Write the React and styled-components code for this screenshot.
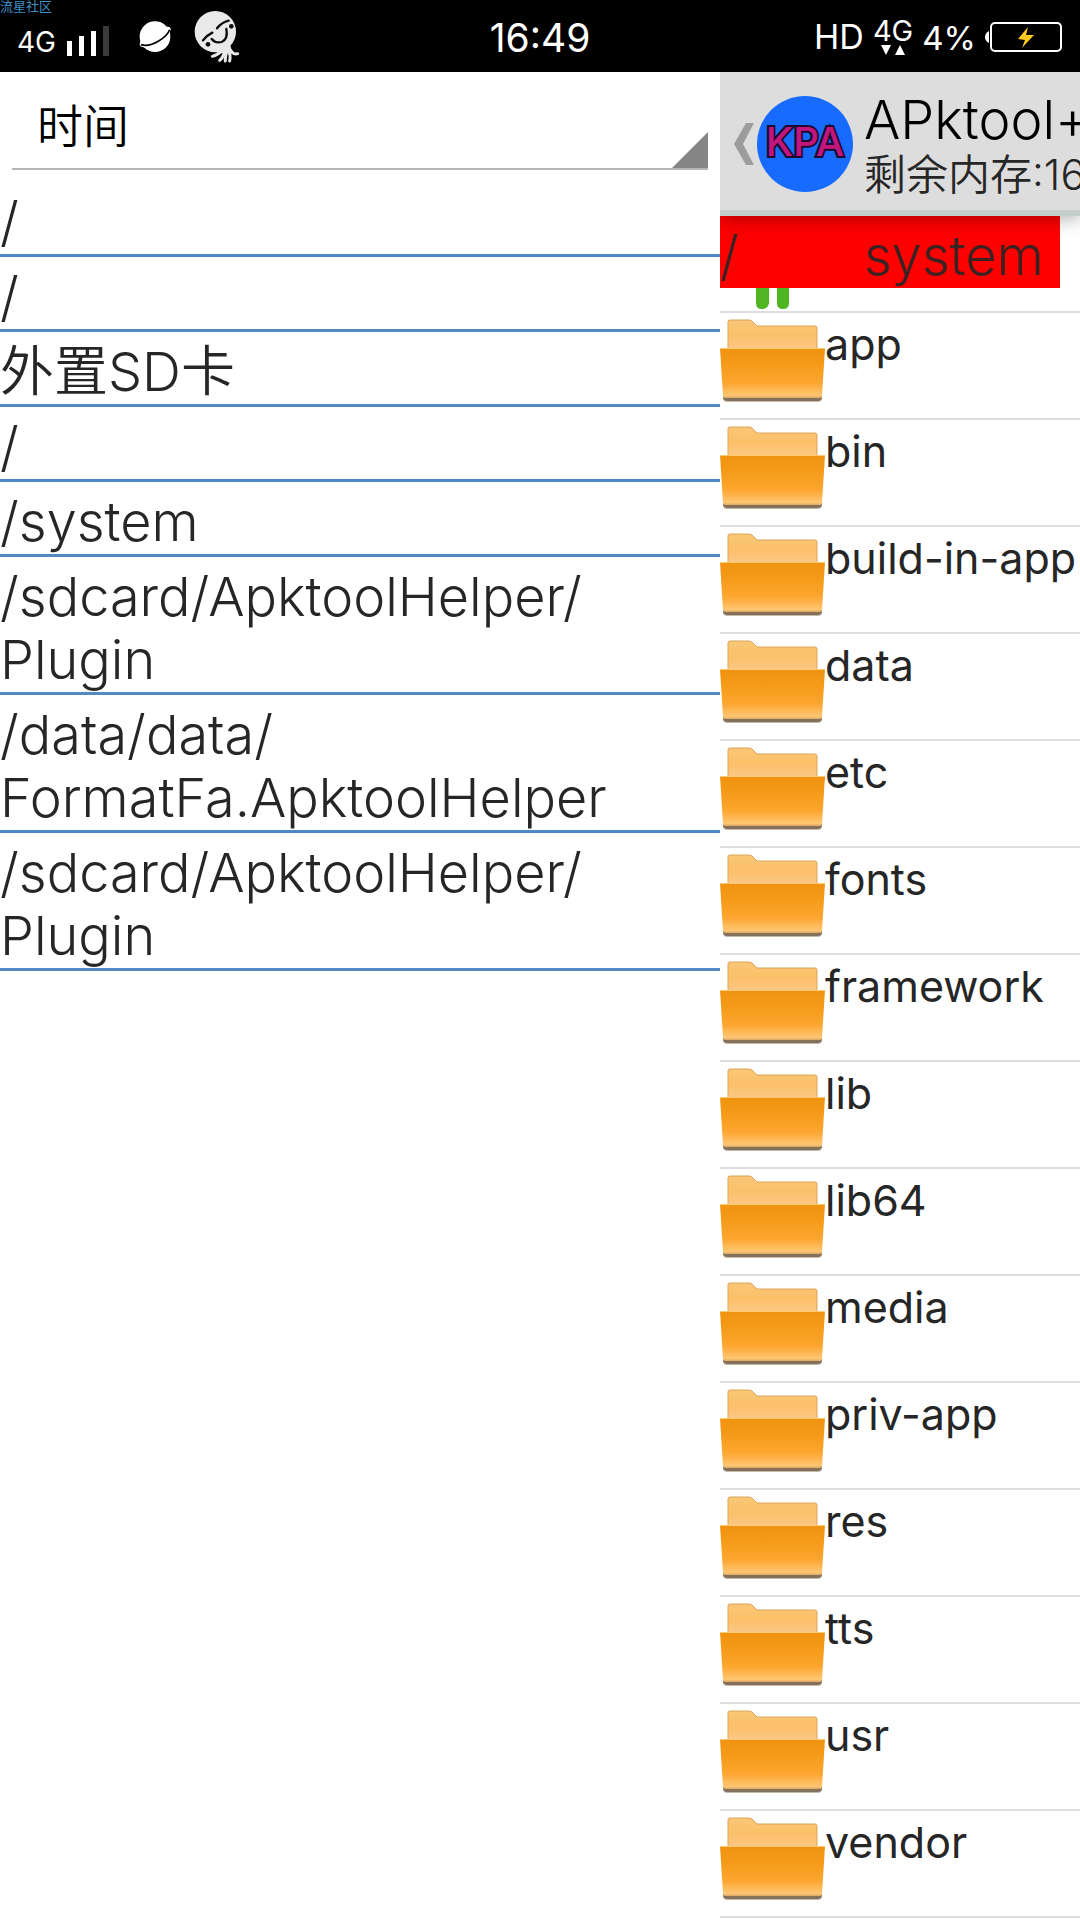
import React from 'react';
import styled, { createGlobalStyle } from 'styled-components';

const GlobalStyle = createGlobalStyle`
  * {
    box-sizing: border-box;
  }

  body {
    margin: 0;
    background: #ffffff;
    font-family: Inter, "Noto Sans CJK SC", sans-serif;
    font-weight: 350;
    color: #262626;
    overflow-x: hidden;
  }

  button, select {
    font: inherit;
    color: inherit;
    border: none;
    border-radius: 0;
    background: none;
    padding: 0;
    margin: 0;
    cursor: pointer;
  }

  ul {
    list-style: none;
    margin: 0;
    padding: 0;
  }
`;

const Screen = styled.div`
  display: flex;
  flex-direction: column;
  min-height: 100vh;
`;

/* Status bar */
const StatusBar = styled.div`
  position: relative;
  display: grid;
  grid-template-columns: 1fr auto 1fr;
  align-items: center;
  height: 72px;
  padding: 0 17px;
  background: #000000;
  color: #ffffff;
  font-weight: 400;
`;

const Watermark = styled.span`
  position: absolute;
  top: 0;
  left: 0;
  font-size: 13px;
  line-height: 13px;
  color: #3f8fc8;
`;

const StatusGroup = styled.div`
  display: flex;
  align-items: center;
  justify-content: ${({ $end }) => ($end ? 'flex-end' : 'flex-start')};
  gap: ${({ $end }) => ($end ? '9px' : '11px')};

  svg {
    flex: none;
  }
`;

const StatusText = styled.span`
  font-size: ${({ $size }) => $size}px;
  line-height: 40px;
  padding-top: ${({ $drop }) => $drop || 0}px;
`;

const SignalBars = styled.span`
  display: flex;
  padding-top: 8px;
`;

const NotificationIcons = styled.div`
  display: flex;
  align-items: center;
  gap: 19px;
  padding-left: 18px;
  padding-bottom: 2px;
`;

const DataBadge = styled.span`
  display: flex;
  flex-direction: column;
  align-items: center;
  padding-bottom: 2px;
  font-size: 29px;
  line-height: 28px;
`;

const Clock = styled.time`
  font-size: 39px;
  line-height: 72px;
  padding-top: 2px;
`;

/* Panels */
const Panels = styled.div`
  display: grid;
  grid-template-columns: 2fr minmax(0, 1fr);
  flex: 1;
`;

const Drawer = styled.aside`
  min-width: 0;
`;

const SortBox = styled.label`
  position: relative;
  display: block;
  margin: 0 12px 12px;
  border-bottom: 2px solid #b5b5b5;
`;

const SortSelect = styled.select`
  display: block;
  width: 100%;
  height: 96px;
  padding: 12px 26px 0 25px;
  appearance: none;
  outline: none;
  font-size: 46px;
  color: #000000;
`;

const Corner = styled.svg`
  position: absolute;
  right: 0;
  bottom: 0;
`;

const Bookmark = styled.button`
  display: block;
  width: 100%;
  padding: 8px 0 1px;
  border-bottom: 3px solid #5189c4;
  font-size: 54px;
  line-height: 63px;
  text-align: left;
`;

const Browser = styled.main`
  min-width: 0;
  overflow: hidden;
`;

const Header = styled.header`
  position: relative;
  z-index: 1;
  display: flex;
  align-items: center;
  height: 144px;
  padding: 6px 0 0 13px;
  background: #dddddd;
  border-bottom: 6px solid #c4cecb;
  box-shadow: 0 2px 18px rgba(0, 0, 0, 0.35);
`;

const BackButton = styled.button`
  display: flex;
  flex: none;
  width: 24px;
`;

const Logo = styled.div`
  display: flex;
  flex: none;
  align-items: center;
  justify-content: center;
  width: 96px;
  height: 96px;
  padding-bottom: 4px;
  border-radius: 50%;
  background: #176cff;
  font-size: 40px;
  font-weight: 500;
  line-height: 40px;
  color: #c4157c;
  -webkit-text-stroke: 4px #1c0a30;
  paint-order: stroke fill;
`;

const Titles = styled.div`
  flex: none;
  padding: 2px 0 0 11px;
  white-space: nowrap;
`;

const Title = styled.h1`
  margin: 0;
  font-size: 54px;
  font-weight: 350;
  line-height: 60px;
  color: #000000;
`;

const Subtitle = styled.p`
  margin: 0;
  font-size: 42px;
  line-height: 50px;
`;

const PathBar = styled.nav`
  display: flex;
  height: 72px;
  margin-right: 20px;
  background: #ff0000;
  color: #3a2222;
`;

const Segment = styled.button`
  min-width: ${({ $root }) => ($root ? '144px' : '0')};
  padding-top: 6px;
  font-size: 54px;
  line-height: 63px;
  text-align: left;
`;

const ParentRow = styled.li`
  height: 25px;
  padding-left: 34px;
  border-bottom: 2px solid #dedede;
`;

const FileRow = styled.li`
  border-bottom: 2px solid #dedede;
`;

const FileButton = styled.button`
  display: flex;
  align-items: flex-start;
  width: 100%;
  height: 105px;

  svg {
    flex: none;
  }
`;

const FileName = styled.span`
  font-size: 43px;
  font-weight: 400;
  line-height: 52px;
  padding-top: 5px;
  white-space: nowrap;
`;

const bookmarks = [
  ['/'],
  ['/'],
  ['外置SD卡'],
  ['/'],
  ['/system'],
  ['/sdcard/ApktoolHelper/', 'Plugin'],
  ['/data/data/', 'FormatFa.ApktoolHelper'],
  ['/sdcard/ApktoolHelper/', 'Plugin'],
];

const files = [
  'app',
  'bin',
  'build-in-app',
  'data',
  'etc',
  'fonts',
  'framework',
  'lib',
  'lib64',
  'media',
  'priv-app',
  'res',
  'tts',
  'usr',
  'vendor',
];

const SignalIcon = () => (
  <svg width="42" height="30" viewBox="0 0 42 30" fill="#ffffff">
    <rect x="0" y="15" width="5" height="15" />
    <rect x="12" y="10" width="5" height="20" />
    <rect x="24" y="5" width="5" height="25" />
    <rect x="36" y="0" width="6" height="30" fill="#3a3a3a" />
  </svg>
);

const PlanetIcon = () => (
  <svg width="34" height="35" viewBox="0 0 102 105">
    <circle cx="51" cy="53" r="46" fill="#ffffff" />
    <path d="M82 24 Q98 20 98 31 Q97 43 88 54Z" fill="#ffffff" />
    <path d="M8 66 Q2 77 8 82 Q14 87 28 83Z" fill="#ffffff" />
    <path d="M9 77 Q32 84 62 66 Q89 49 95 32" fill="none" stroke="#000000" strokeWidth="5" />
  </svg>
);

const SquidIcon = () => (
  <svg width="50" height="55" viewBox="0 0 150 165">
    <circle cx="73" cy="68" r="62" fill="#e9e9e9" />
    <path d="M134 72 Q128 94 118 106 Q118 120 128 128 L104 134 L76 130 Q84 126 84 118Z" fill="#e9e9e9" />
    <g fill="none" stroke="#e9e9e9" strokeWidth="9" strokeLinecap="round">
      <path d="M94 124 Q80 138 64 142" />
      <path d="M102 126 Q96 146 86 154" />
      <path d="M108 124 Q102 146 103 156" />
      <path d="M112 122 Q120 140 116 156" />
      <path d="M114 118 Q124 138 140 134" />
    </g>
    <g fill="none" stroke="#0c0c0c" strokeWidth="7" strokeLinecap="round">
      <path d="M36 94 Q46 80 64 71" />
      <path d="M78 58 Q92 40 113 35" />
      <path d="M62 90 Q74 104 92 99 Q112 90 106 60" />
    </g>
    <circle cx="51" cy="106" r="7" fill="#0c0c0c" />
    <circle cx="121" cy="52" r="7" fill="#0c0c0c" />
  </svg>
);

const BatteryIcon = () => (
  <svg width="78" height="32" viewBox="0 0 78 32">
    <path d="M4 10 Q0 12 0 16 Q0 20 4 22Z" fill="#ffffff" />
    <rect x="6" y="2" width="70" height="28" rx="4" fill="none" stroke="#ffffff" strokeWidth="2" />
    <path d="M43 6 L33 18 L40 19 L37 27 L49 14 L41 14Z" fill="#ffc91f" />
  </svg>
);

const ArrowsIcon = () => (
  <svg width="24" height="10" viewBox="0 0 24 10" fill="#ffffff">
    <path d="M0 0H10L5 10Z" />
    <path d="M14 10H24L19 0Z" />
  </svg>
);

const FolderIcon = () => (
  <svg width="105" height="105" viewBox="0 0 105 105">
    <path
      d="M8 38 V9 Q8 7 10 7 H29 Q32 7 34 10 L37 13 H95 Q97 13 97 15 V38Z"
      fill="url(#folderBack)"
      stroke="#d9a55a"
      strokeWidth="1"
    />
    <path d="M3 82 H102 V86 Q101 89 98 89 H7 Q4 89 3 86Z" fill="#85715a" opacity="0.5" />
    <path d="M3 82 H102 V85 Q101 88 98 88 H7 Q4 88 3 85Z" fill="#85715a" />
    <path d="M0 35 H105 L102 83 Q102 85 100 85 H5 Q3 85 3 83Z" fill="url(#folderFront)" />
    <path d="M0 35.5H105" stroke="#ffc873" strokeWidth="1" />
  </svg>
);

const AndroidLegs = () => (
  <svg width="42" height="21" viewBox="0 0 42 21" fill="#50b522">
    <path d="M2 0H15V15Q14 21 8 21Q2 21 2 15Z" />
    <path d="M23 0H35V15Q35 21 29 21Q23 21 23 15Z" />
  </svg>
);

/* Gradients shared by every folder icon */
const HiddenDefs = styled.svg`
  position: absolute;
`;

const FolderGradients = () => (
  <HiddenDefs width="0" height="0" aria-hidden="true">
    <defs>
      <linearGradient id="folderBack" x1="0" y1="0" x2="0" y2="1">
        <stop offset="0" stopColor="#fac777" />
        <stop offset="0.5" stopColor="#fcc069" />
        <stop offset="1" stopColor="#fcc98a" />
      </linearGradient>
      <linearGradient id="folderFront" x1="0" y1="0" x2="0" y2="1">
        <stop offset="0" stopColor="#ef920f" />
        <stop offset="0.3" stopColor="#f49a17" />
        <stop offset="0.7" stopColor="#fea630" />
        <stop offset="0.95" stopColor="#fec673" />
        <stop offset="1" stopColor="#d9a866" />
      </linearGradient>
    </defs>
  </HiddenDefs>
);

const App = () => {
  return (
    <Screen>
      <GlobalStyle />
      <FolderGradients />

      <StatusBar>
        <Watermark>流星社区</Watermark>
        <StatusGroup>
          <StatusText $size={28} $drop={10}>4G</StatusText>
          <SignalBars>
            <SignalIcon />
          </SignalBars>
          <NotificationIcons>
            <PlanetIcon />
            <SquidIcon />
          </NotificationIcons>
        </StatusGroup>
        <Clock>16:49</Clock>
        <StatusGroup $end>
          <StatusText $size={34}>HD</StatusText>
          <DataBadge>
            4G
            <ArrowsIcon />
          </DataBadge>
          <StatusText $size={33} $drop={2}>4%</StatusText>
          <BatteryIcon />
        </StatusGroup>
      </StatusBar>

      <Panels>
        <Drawer>
          <SortBox>
            <SortSelect aria-label="时间" defaultValue="time">
              <option value="time">时间</option>
            </SortSelect>
            <Corner width="36" height="36" viewBox="0 0 36 36">
              <path d="M36 0V36H0Z" fill="#858585" />
            </Corner>
          </SortBox>
          <ul>
            {bookmarks.map((parts, index) => (
              <li key={index}>
                <Bookmark type="button">
                  {parts[0]}
                  {parts[1] && <wbr />}
                  {parts[1]}
                </Bookmark>
              </li>
            ))}
          </ul>
        </Drawer>

        <Browser>
          <Header>
            <BackButton type="button" aria-label="Back">
              <svg width="22" height="42" viewBox="0 0 22 42">
                <path d="M13 0H21L10 21L21 42H13L1 21Z" fill="#9c9c9c" />
              </svg>
            </BackButton>
            <Logo>KPA</Logo>
            <Titles>
              <Title>APktool+</Title>
              <Subtitle>剩余内存:16</Subtitle>
            </Titles>
          </Header>
          <PathBar>
            <Segment type="button" $root>/</Segment>
            <Segment type="button">system</Segment>
          </PathBar>
          <ul>
            <ParentRow>
              <AndroidLegs />
            </ParentRow>
            {files.map((name) => (
              <FileRow key={name}>
                <FileButton type="button">
                  <FolderIcon />
                  <FileName>{name}</FileName>
                </FileButton>
              </FileRow>
            ))}
          </ul>
        </Browser>
      </Panels>
    </Screen>
  );
};

export default App;
